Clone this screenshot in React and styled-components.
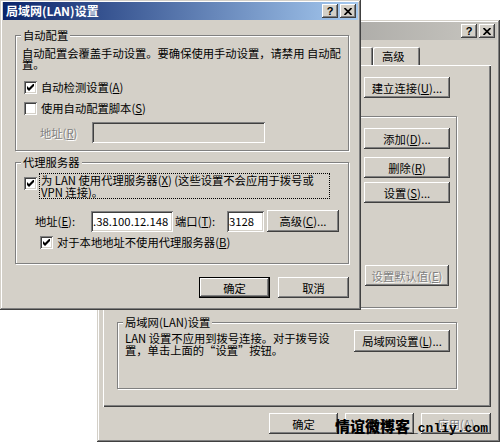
import React from "react";
import styled, { createGlobalStyle } from "styled-components";

const FACE = "#d4d0c8";
const FS = "11.3px";

const Global = createGlobalStyle`
  html, body { margin: 0; padding: 0; background: #fff; }
  body {
    font-family: "Noto Sans CJK SC", "Liberation Sans", sans-serif;
    font-size: ${FS};
    color: #000;
  }
  #root { width: 500px; height: 442px; }
`;

const Desktop = styled.div`
  position: relative;
  width: 500px;
  height: 442px;
  overflow: hidden;
  background: #fff;
`;

const Window = styled.div`
  position: absolute;
  left: ${(p) => p.$left}px;
  top: ${(p) => p.$top}px;
  width: ${(p) => p.$w}px;
  height: ${(p) => p.$h}px;
  z-index: ${(p) => p.$z};
  box-sizing: border-box;
  padding: 2px 3px 3px 3px;
  background: ${FACE};
  box-shadow: inset -1px -1px #404040, inset 1px 1px ${FACE},
    inset -2px -2px #808080, inset 2px 2px #fff;
  display: flex;
  flex-direction: column;
`;

const TitleBar = styled.div`
  height: 18px;
  flex: none;
  display: flex;
  align-items: center;
  justify-content: space-between;
  padding: 0 2px 0 3px;
  background: ${(p) =>
    p.$active
      ? "linear-gradient(to right, #0a246a, #a6caf0)"
      : "linear-gradient(to right, #808080, #c8c6c0)"};
  color: ${(p) => (p.$active ? "#fff" : FACE)};
  font-weight: bold;
  font-size: 12px;
  line-height: 18px;
`;

const CaptionButtons = styled.div`
  display: flex;
  gap: 2px;
`;

const CaptionButton = styled.span`
  width: 16px;
  height: 14px;
  box-sizing: border-box;
  display: flex;
  align-items: center;
  justify-content: center;
  background: ${FACE};
  box-shadow: inset -1px -1px #404040, inset 1px 1px #fff,
    inset -2px -2px #808080, inset 2px 2px ${FACE};
  color: #000;
  font-family: "Liberation Sans", sans-serif;
  font-weight: bold;
  font-size: 11px;
  line-height: 14px;
`;

const Body = styled.div`
  display: flex;
  flex-direction: column;
  padding: ${(p) => p.$pad};
`;

const GroupBox = styled.div`
  position: relative;
  box-sizing: border-box;
  border: 1px solid #808080;
  box-shadow: inset 1px 1px #fff, 1px 1px #fff;
  padding: ${(p) => p.$pad};
  margin-top: ${(p) => p.$mt || 0}px;
  height: ${(p) => (p.$h ? `${p.$h}px` : "auto")};
  display: flex;
  flex-direction: ${(p) => p.$dir || "column"};
  align-items: ${(p) => p.$align || "stretch"};
`;

const GroupCaption = styled.span`
  position: absolute;
  top: -7px;
  left: 5px;
  padding: 0 2px;
  background: ${FACE};
  line-height: 13px;
  white-space: nowrap;
`;

const Text = styled.div`
  line-height: 11px;
  white-space: nowrap;
  margin-top: ${(p) => p.$mt || 0}px;
`;

const CheckRow = styled.div`
  display: flex;
  align-items: ${(p) => (p.$top ? "flex-start" : "center")};
  gap: ${(p) => p.$gap ?? 4}px;
  margin-top: ${(p) => p.$mt || 0}px;
  padding-left: ${(p) => p.$indent || 0}px;
  line-height: 13px;
  white-space: nowrap;
`;

const Box = styled.span`
  flex: none;
  width: 13px;
  height: 13px;
  box-sizing: border-box;
  background: #fff;
  box-shadow: inset 1px 1px #808080, inset -1px -1px #fff,
    inset 2px 2px #404040, inset -2px -2px ${FACE};
  display: flex;
  align-items: center;
  justify-content: center;
  margin-top: ${(p) => p.$mt || 0}px;
`;

const FocusLabel = styled.div`
  width: 291px;
  box-sizing: border-box;
  border: 1px dotted #000;
  padding: 0 1px;
  line-height: 12px;
  white-space: nowrap;
`;

const FieldRow = styled.div`
  display: flex;
  align-items: center;
  margin-top: ${(p) => p.$mt || 0}px;
  padding-left: ${(p) => p.$indent || 0}px;
`;

const FieldLabel = styled.span`
  flex: none;
  width: ${(p) => p.$w}px;
  margin-left: ${(p) => p.$ml || 0}px;
  white-space: nowrap;
  color: ${(p) => (p.$disabled ? "#808080" : "#000")};
  text-shadow: ${(p) => (p.$disabled ? "1px 1px #fff" : "none")};
`;

const Field = styled.input`
  flex: none;
  width: ${(p) => p.$w}px;
  height: 21px;
  box-sizing: border-box;
  border: none;
  outline: none;
  margin: 0;
  padding: 0 1px 0 2px;
  font-family: "Noto Sans CJK SC", "Liberation Sans", sans-serif;
  font-size: ${FS};
  color: #000;
  background: ${(p) => (p.$disabled ? FACE : "#fff")};
  box-shadow: inset 1px 1px #808080, inset -1px -1px #fff,
    inset 2px 2px #404040, inset -2px -2px ${FACE};
`;

const Button = styled.button`
  flex: none;
  width: ${(p) => p.$w}px;
  height: ${(p) => p.$h || 21}px;
  margin: ${(p) => p.$m || 0};
  box-sizing: border-box;
  border: ${(p) => (p.$default ? "1px solid #000" : "none")};
  padding: 0;
  background: ${FACE};
  box-shadow: inset -1px -1px #404040, inset 1px 1px #fff,
    inset -2px -2px #808080, inset 2px 2px ${FACE};
  font-family: "Noto Sans CJK SC", "Liberation Sans", sans-serif;
  font-size: ${FS};
  line-height: 14px;
  color: ${(p) => (p.$disabled ? "#808080" : "#000")};
  text-shadow: ${(p) => (p.$disabled ? "1px 1px #fff" : "none")};
  white-space: nowrap;
`;

const ButtonRow = styled.div`
  display: flex;
  justify-content: flex-end;
  gap: ${(p) => p.$gap}px;
  margin-top: ${(p) => p.$mt || 0}px;
  padding-right: ${(p) => p.$pr || 0}px;
`;

const TabStrip = styled.div`
  display: flex;
  align-items: flex-end;
  margin-top: 7px;
  padding-left: 3px;
  height: 18px;
`;

const Tab = styled.div`
  flex: none;
  width: ${(p) => p.$w}px;
  height: 18px;
  box-sizing: border-box;
  padding-left: 9px;
  line-height: 18px;
  box-shadow: inset 1px 1px #fff, inset -1px 0 #404040, inset -2px 0 #808080;
  border-radius: 2px 2px 0 0;
  white-space: nowrap;
`;

const TabPanel = styled.div`
  box-sizing: border-box;
  height: 342px;
  margin: 0 6px 0 3px;
  padding: 12px 34px 0 14px;
  box-shadow: inset 1px 1px #fff, inset -1px -1px #404040,
    inset -2px -2px #808080;
  display: flex;
  flex-direction: column;
`;

const LanText = styled.div`
  line-height: 12px;
  margin-top: 2px;
  white-space: nowrap;
`;

const Watermark = styled.div`
  position: absolute;
  left: 335px;
  top: 416px;
  z-index: 10;
  display: flex;
  align-items: baseline;
  white-space: nowrap;
  color: #000;
  pointer-events: none;
`;

const WmCn = styled.span`
  font-family: "Noto Sans CJK SC", sans-serif;
  font-weight: 900;
  font-size: 15px;
  line-height: 20px;
`;

const WmEn = styled.span`
  font-family: "Liberation Mono", monospace;
  font-weight: bold;
  font-size: 13px;
`;

const Check = () => (
  <svg width="7" height="7" viewBox="0 0 7 7">
    <polygon points="0,2 2,4 7,-1 7,2 2,7 0,5" fill="#000" />
  </svg>
);

const CloseGlyph = () => (
  <svg width="8" height="7" viewBox="0 0 8 7">
    <path d="M0.5 0 L7.5 7 M7.5 0 L0.5 7" stroke="#000" strokeWidth="1.7" />
  </svg>
);

const Caption = () => (
  <CaptionButtons>
    <CaptionButton>?</CaptionButton>
    <CaptionButton>
      <CloseGlyph />
    </CaptionButton>
  </CaptionButtons>
);

const CheckBox = ({ checked, mt }) => (
  <Box $mt={mt}>{checked ? <Check /> : null}</Box>
);

export default function App() {
  return (
    <Desktop>
      <Global />

      <Window $left={97} $top={20} $w={403} $h={422} $z={1}>
        <TitleBar>
          <span>Internet 选项</span>
          <Caption />
        </TitleBar>
        <TabStrip>
          <Tab $w={54}>常规</Tab>
          <Tab $w={54}>安全</Tab>
          <Tab $w={54}>内容</Tab>
          <Tab $w={54}>连接</Tab>
          <Tab $w={54}>程序</Tab>
          <Tab $w={47}>高级</Tab>
        </TabStrip>
        <TabPanel>
          <ButtonRow $gap={0} $pr={7}>
            <Button $w={86}>
              建立连接(<u>U</u>)...
            </Button>
          </ButtonRow>
          <GroupBox $mt={18} $h={192} $pad="11px 6px 0 6px" $align="flex-end">
            <GroupCaption>拨号设置</GroupCaption>
            <Button $w={86}>
              添加(<u>D</u>)...
            </Button>
            <Button $w={86} $m="8px 0 0 0">
              删除(<u>R</u>)
            </Button>
            <Button $w={86} $m="4px 0 0 0">
              设置(<u>S</u>)...
            </Button>
            <Button $w={84} $m="62px 1px 0 0" $disabled>
              设置默认值(<u>E</u>)
            </Button>
          </GroupBox>
          <GroupBox $mt={14} $h={67} $pad="7px 6px 0 7px" $dir="row" $align="flex-start">
            <GroupCaption>局域网(LAN)设置</GroupCaption>
            <LanText>
              LAN 设置不应用到拨号连接。对于拨号设
              <br />
              置，单击上面的“设置”按钮。
            </LanText>
            <Button $w={96} $h={22} $m="0 0 0 auto">
              局域网设置(<u>L</u>)...
            </Button>
          </GroupBox>
        </TabPanel>
        <ButtonRow $gap={7} $mt={6} $pr={6}>
          <Button $w={69}>确定</Button>
          <Button $w={69}>取消</Button>
          <Button $w={70} $disabled>
            应用(<u>A</u>)
          </Button>
        </ButtonRow>
      </Window>

      <Window $left={0} $top={0} $w={361} $h={310} $z={2}>
        <TitleBar $active>
          <span>局域网(LAN)设置</span>
          <Caption />
        </TitleBar>
        <Body $pad="15px 9px 0 12px">
          <GroupBox $pad="12px 6px 7px 6px">
            <GroupCaption>自动配置</GroupCaption>
            <Text>
              自动配置会覆盖手动设置。要确保使用手动设置，请禁用 自动配
              <br />
              置。
            </Text>
            <CheckRow $mt={11} $indent={2}>
              <CheckBox checked />
              <span>
                自动检测设置(<u>A</u>)
              </span>
            </CheckRow>
            <CheckRow $mt={8} $indent={2}>
              <CheckBox />
              <span>
                使用自动配置脚本(<u>S</u>)
              </span>
            </CheckRow>
            <FieldRow $mt={7} $indent={18}>
              <FieldLabel $w={52} $disabled>
                地址(<u>R</u>)
              </FieldLabel>
              <Field $w={173} $disabled readOnly value="" />
            </FieldRow>
          </GroupBox>

          <GroupBox $mt={11} $pad="10px 6px 14px 6px">
            <GroupCaption>代理服务器</GroupCaption>
            <CheckRow $top $gap={2} $indent={2}>
              <CheckBox checked mt={4} />
              <FocusLabel>
                为 LAN 使用代理服务器(<u>X</u>) (这些设置不会应用于拨号或
                <br />
                VPN 连接)。
              </FocusLabel>
            </CheckRow>
            <FieldRow $mt={11}>
              <FieldLabel $w={56} $ml={13}>
                地址(<u>E</u>):
              </FieldLabel>
              <Field $w={82} readOnly value=".38.100.12.148" />
              <FieldLabel $w={52} $ml={2}>
                端口(<u>T</u>):
              </FieldLabel>
              <Field $w={37} readOnly value="3128" />
              <Button $w={72} $h={22} $m="0 0 0 3px">
                高级(<u>C</u>)...
              </Button>
            </FieldRow>
            <CheckRow $mt={4} $indent={18}>
              <CheckBox checked />
              <span>
                对于本地地址不使用代理服务器(<u>B</u>)
              </span>
            </CheckRow>
          </GroupBox>

          <ButtonRow $gap={8} $mt={13}>
            <Button $w={71} $default>
              确定
            </Button>
            <Button $w={71}>取消</Button>
          </ButtonRow>
        </Body>
      </Window>

      <Watermark>
        <WmCn>情谊微博客</WmCn>
        <WmEn>_cnliy.com</WmEn>
      </Watermark>
    </Desktop>
  );
}
